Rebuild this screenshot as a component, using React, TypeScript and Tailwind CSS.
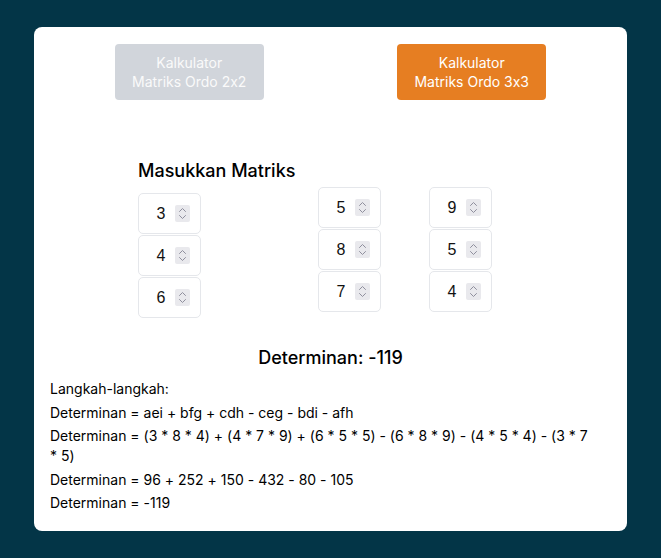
import React from "react";

const font = { fontFamily: '"Inter", "Noto Sans", sans-serif' };

function Spinner() {
  return (
    <span className="flex h-[17px] w-[15px] shrink-0 items-center justify-center rounded-[2px] bg-[#e9e9ed]">
      <svg width="9" height="13" viewBox="0 0 9 13" fill="none" stroke="#8f8f9d" strokeWidth="1" strokeLinecap="round" strokeLinejoin="round">
        <path d="M1.5 4.5 L4.5 1.5 L7.5 4.5" />
        <path d="M1.5 8.5 L4.5 11.5 L7.5 8.5" />
      </svg>
    </span>
  );
}

function Cell({ v }: { v: number }) {
  return (
    <div className="flex h-[41px] w-[63px] items-center rounded-[5px] border border-[#e5e7eb] bg-white pl-2 pr-[10px]">
      <input
        type="text"
        defaultValue={String(v)}
        className="w-0 flex-1 bg-transparent text-center text-[16px] text-[#111] outline-none"
        style={{ fontFamily: '"Liberation Sans", Arial, sans-serif' }}
      />
      <Spinner />
    </div>
  );
}

export default function App() {
  const cols = [
    [3, 4, 6],
    [5, 8, 7],
    [9, 5, 4],
  ];
  return (
    <div className="min-h-[558px] w-full bg-[#033547] pt-[27px] [font-feature-settings:'calt'_0]" style={font}>
      <div className="mx-auto w-[593px] rounded-lg bg-white px-[14px] pb-[18px] pt-[17px]">
        <div className="flex justify-around">
          <button className="h-[56px] w-[149px] rounded-[4px] bg-[#d1d5db] text-[14px] leading-[19px] text-[#fafafa]">
            Kalkulator
            <br />
            Matriks Ordo 2x2
          </button>
          <button className="h-[56px] w-[149px] rounded-[4px] bg-[#e67e22] text-[14px] leading-[19px] text-white">
            Kalkulator
            <br />
            Matriks Ordo 3x3
          </button>
        </div>

        <div className="mt-[57px] flex items-start pl-[90px]">
          <div className="flex w-[180px] flex-col">
            <h2 className="h-[28px] text-[18px] font-medium leading-[28px] text-black">Masukkan Matriks</h2>
            <div className="mt-[8px] flex flex-col gap-px">
              {cols[0].map((v, i) => (
                <Cell key={i} v={v} />
              ))}
            </div>
          </div>
          <div className="mt-[30px] flex flex-col gap-px">
            {cols[1].map((v, i) => (
              <Cell key={i} v={v} />
            ))}
          </div>
          <div className="ml-[48px] mt-[30px] flex flex-col gap-px">
            {cols[2].map((v, i) => (
              <Cell key={i} v={v} />
            ))}
          </div>
        </div>

        <h3 className="mt-[26px] text-center text-[18px] font-medium leading-[28px] text-black">Determinan: -119</h3>
        <div className="mt-[7px] flex flex-col gap-[3.5px] pl-[2px] pr-[19px] text-[14px] leading-[20px] text-black">
          <p>Langkah-langkah:</p>
          <p>Determinan = aei + bfg + cdh - ceg - bdi - afh</p>
          <p>Determinan = (3 * 8 * 4) + (4 * 7 * 9) + (6 * 5 * 5) - (6 * 8 * 9) - (4 * 5 * 4) - (3 * 7 * 5)</p>
          <p>Determinan = 96 + 252 + 150 - 432 - 80 - 105</p>
          <p>Determinan = -119</p>
        </div>
      </div>
    </div>
  );
}
